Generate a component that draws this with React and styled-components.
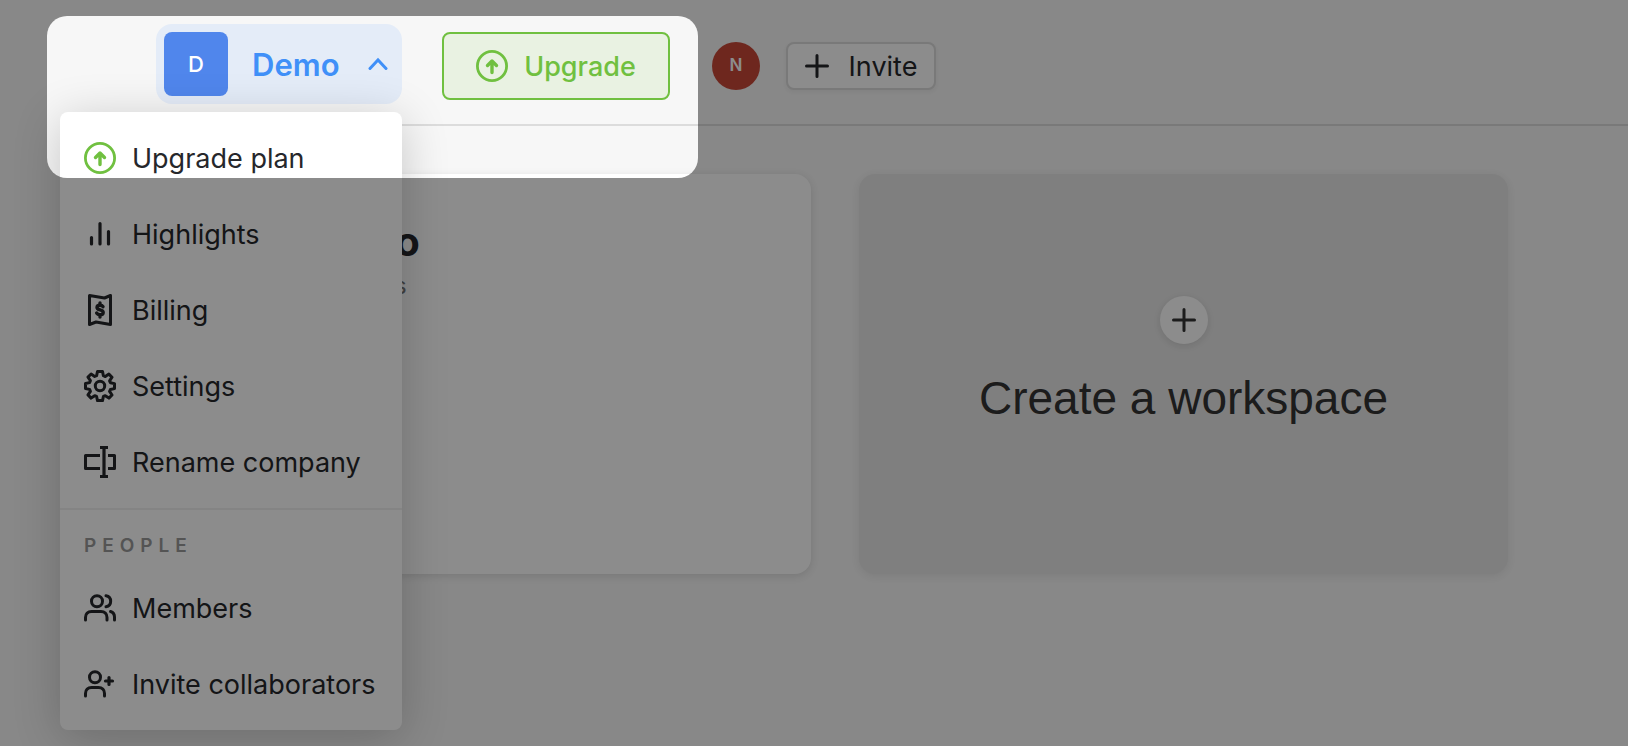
import React from "react";
import styled, { createGlobalStyle } from "styled-components";

const colors = {
  page: "#f7f7f7",
  text: "#26272b",
  blue: "#4090f8",
  green: "#70c040",
  border: "#dcdcdc",
};

const GlobalStyle = createGlobalStyle`
  * {
    box-sizing: border-box;
  }
  html,
  body,
  #root {
    height: 100%;
  }
  body {
    margin: 0;
    overflow: hidden;
    background: ${colors.page};
    color: ${colors.text};
    font-family: Inter, "Liberation Sans", sans-serif;
  }
  button {
    font: inherit;
    color: inherit;
    cursor: pointer;
  }
`;

const Page = styled.div`
  position: relative;
  min-height: 100%;
  overflow: hidden;
`;

const Header = styled.header`
  display: flex;
  align-items: flex-start;
  height: 126px;
  margin-left: 64px;
  padding: 24px 24px 0 92px;
  border-bottom: 2px solid ${colors.border};
`;

const CompanyButton = styled.button`
  display: flex;
  align-items: center;
  width: 246px;
  height: 80px;
  padding: 8px 14px 8px 8px;
  border: 0;
  border-radius: 16px;
  background: #e4ecf8;
  color: ${colors.blue};
  font-size: 31px;
  font-weight: 600;
`;

const CompanyLogo = styled.span`
  display: flex;
  align-items: center;
  justify-content: center;
  width: 64px;
  height: 64px;
  margin-right: 24px;
  border-radius: 8px;
  background: #5086ec;
  color: #fff;
  font-size: 22px;
  font-weight: 500;
`;

const Chevron = styled.svg`
  margin-left: auto;
`;

const Actions = styled.div`
  display: flex;
  align-items: center;
  margin: 8px 0 0 40px;
`;

const UpgradeButton = styled.button`
  display: flex;
  align-items: center;
  justify-content: center;
  gap: 16px;
  width: 228px;
  height: 68px;
  padding: 0;
  border: 2px solid ${colors.green};
  border-radius: 8px;
  background: #e9f2e2;
  color: ${colors.green};
  font-size: 27px;
  font-weight: 500;
`;

const Avatar = styled.span`
  display: flex;
  align-items: center;
  justify-content: center;
  width: 48px;
  height: 48px;
  margin: 0 26px 0 42px;
  padding-bottom: 3px;
  border-radius: 50%;
  background: #c84838;
  color: #fff;
  font-size: 17px;
  font-weight: 600;
`;

const InviteButton = styled.button`
  display: flex;
  align-items: center;
  justify-content: center;
  gap: 20px;
  width: 150px;
  height: 48px;
  padding: 0;
  border: 2px solid ${colors.border};
  border-radius: 8px;
  background: #fff;
  box-shadow: 0 2px 4px rgba(0, 0, 0, 0.05);
  font-size: 27px;
`;

const Workspaces = styled.main`
  display: grid;
  grid-template-columns: 1fr 1fr;
  gap: 48px;
  padding: 48px 120px 48px 162px;
`;

const WorkspaceCard = styled.section`
  display: flex;
  gap: 24px;
  height: 400px;
  padding: 40px 24px;
  border-radius: 16px;
  background: #fff;
  box-shadow: 0 2px 8px rgba(0, 0, 0, 0.12);
`;

const Thumbnail = styled.div`
  width: 96px;
  height: 96px;
  border-radius: 12px;
  background: #5086ec;
`;

const WorkspaceName = styled.h2`
  margin: 4px 0;
  font-size: 40px;
  font-weight: 700;
  line-height: 48px;
`;

const WorkspaceMeta = styled.p`
  margin: 0;
  color: #777;
  font-size: 24px;
  line-height: 32px;
`;

const CreateCard = styled.button`
  display: flex;
  flex-direction: column;
  align-items: center;
  height: 400px;
  padding: 122px 0 0;
  border: 0;
  border-radius: 16px;
  background: #e8e8e8;
  box-shadow: 0 2px 8px rgba(0, 0, 0, 0.08);
  color: #333;
  font-family: "Liberation Sans", Arial, sans-serif;
  font-size: 46px;
  line-height: 64px;
`;

const PlusCircle = styled.span`
  display: flex;
  align-items: center;
  justify-content: center;
  width: 48px;
  height: 48px;
  margin-bottom: 22px;
  border-radius: 50%;
  background: #fff;
  box-shadow: 0 2px 8px rgba(0, 0, 0, 0.12);
`;

const Menu = styled.nav`
  position: absolute;
  top: 112px;
  left: 60px;
  width: 342px;
  border-radius: 8px;
  background: #fff;
  box-shadow: 0 8px 48px rgba(0, 0, 0, 0.2);
`;

const MenuGroup = styled.div`
  padding: ${(props) => (props.$titled ? "0 0 8px" : "8px 0")};
  & + & {
    border-top: 2px solid #f0f0f0;
  }
`;

const MenuTitle = styled.h3`
  margin: 0;
  padding: 22px 24px 10px;
  color: #9a9a9a;
  font-size: 19px;
  font-weight: 600;
  line-height: 28px;
  letter-spacing: 6px;
`;

const MenuItem = styled.button`
  display: flex;
  align-items: center;
  gap: 16px;
  width: 100%;
  height: 76px;
  padding: 0 24px;
  border: 0;
  background: none;
  font-size: 27px;
  white-space: nowrap;
  svg {
    flex: none;
  }
`;

// everything around the highlighted area is dimmed by the shadow
const Spotlight = styled.div`
  position: absolute;
  top: 16px;
  left: 47px;
  width: 651px;
  height: 162px;
  border-radius: 20px;
  box-shadow: 0 0 0 9999px rgba(0, 0, 0, 0.45);
  pointer-events: none;
`;

function Icon({ size = 32, color = "currentColor", children }) {
  return (
    <svg
      width={size}
      height={size}
      viewBox="0 0 32 32"
      fill="none"
      stroke={color}
      strokeWidth="3"
      strokeLinecap="round"
      strokeLinejoin="round"
      aria-hidden="true"
    >
      {children}
    </svg>
  );
}

const UpgradeIcon = () => (
  <Icon color={colors.green}>
    <circle cx="16" cy="16" r="14.6" strokeWidth="2.8" />
    <path d="M16 22.5V11.5M11.5 15.5L16 11l4.5 4.5" strokeWidth="3.4" />
  </Icon>
);

const HighlightsIcon = () => (
  <Icon>
    <path d="M7.5 19.5v6.5M16 5.500v20.500M24.500 13.500v12.500" strokeWidth="3.2" />
  </Icon>
);

const BillingIcon = () => (
  <Icon>
    <path d="M5.500 1.500L20.500 4L26.500 1.500V30.500L12 28L5.500 30.500Z" />
    <path
      d="M19 12.700c-.6-1-1.700-1.400-3-1.400-1.800 0-3 .8-3 2.200 0 3.200 6.200 1.700 6.200 4.900 0 1.500-1.300 2.300-3.200 2.300-1.500 0-2.700-.5-3.300-1.600M16 9v2M16 21v2"
      strokeWidth="3.4"
    />
  </Icon>
);

// eight teeth, one every 45 degrees
const SettingsIcon = () => (
  <Icon>
    <path d="M13.500 1.500h5l.9 4.200 1.900.8 3.600-2.400 3.100 3.100-2.400 3.600.8 1.900 4.100.9v5l-4.100.9-.8 1.900 2.400 3.600-3.100 3.100-3.600-2.400-1.900.8-.9 4.100h-5l-.9-4.100-1.900-.8-3.600 2.400L4 24.900l2.400-3.600-.8-1.900-4.100-.9v-5l4.100-.9.8-1.900L4 7.100 7.100 4l3.600 2.400 1.900-.8z" />
    <circle cx="16" cy="16" r="4.700" />
  </Icon>
);

const RenameIcon = () => (
  <Icon>
    <path
      d="M16 9.500H1.500V22.500H16M24 9.500H30.500V22.500H24"
      strokeLinecap="butt"
    />
    <path
      d="M16 1.500H24M16 30.500H24M20 1.500V30.500"
      strokeWidth="3.2"
      strokeLinecap="butt"
    />
  </Icon>
);

const MembersIcon = () => (
  <Icon>
    <circle cx="13" cy="9.200" r="5.500" />
    <path d="M1.500 28v-2.500c0-3.600 2.400-6 6-6h9.500c3.600 0 6 2.400 6 6V28M22 3.700c6.200 1 6.200 10 0 11M26.500 19.500c2.500.8 4 2.800 4 5.500v3" />
  </Icon>
);

const CollaboratorIcon = () => (
  <Icon>
    <circle cx="11" cy="9.200" r="5.500" />
    <path d="M1.500 28v-2.500c0-3.600 2.400-6 6-6h7c3.600 0 6 2.400 6 6V28" />
    <path d="M25 9.500v7M21.500 13h7" strokeWidth="3.2" />
  </Icon>
);

const PlusIcon = () => (
  <Icon size={24}>
    <path d="M16 2v28M2 16h28" strokeWidth="4" />
  </Icon>
);

const companyItems = [
  { label: "Upgrade plan", icon: UpgradeIcon },
  { label: "Highlights", icon: HighlightsIcon },
  { label: "Billing", icon: BillingIcon },
  { label: "Settings", icon: SettingsIcon },
  { label: "Rename company", icon: RenameIcon },
];

const peopleItems = [
  { label: "Members", icon: MembersIcon },
  { label: "Invite collaborators", icon: CollaboratorIcon },
];

function MenuItems({ items }) {
  return items.map(({ label, icon: ItemIcon }) => (
    <MenuItem key={label} type="button">
      <ItemIcon />
      {label}
    </MenuItem>
  ));
}

function App() {
  return (
    <Page>
      <GlobalStyle />
      <Header>
        <CompanyButton type="button" aria-expanded="true">
          <CompanyLogo>D</CompanyLogo>
          Demo
          <Chevron width="20" height="14" viewBox="0 0 20 14" fill="none">
            <path
              d="M2 11.500L10 3l8 8.500"
              stroke="currentColor"
              strokeWidth="3"
              strokeLinecap="round"
            />
          </Chevron>
        </CompanyButton>
        <Actions>
          <UpgradeButton type="button">
            <UpgradeIcon />
            Upgrade
          </UpgradeButton>
          <Avatar>N</Avatar>
          <InviteButton type="button">
            <PlusIcon />
            Invite
          </InviteButton>
        </Actions>
      </Header>
      <Workspaces>
        <WorkspaceCard>
          <Thumbnail />
          <div>
            <WorkspaceName>Demo</WorkspaceName>
            <WorkspaceMeta>0 boards</WorkspaceMeta>
          </div>
        </WorkspaceCard>
        <CreateCard type="button">
          <PlusCircle>
            <PlusIcon />
          </PlusCircle>
          Create a workspace
        </CreateCard>
      </Workspaces>
      <Menu aria-label="Company">
        <MenuGroup>
          <MenuItems items={companyItems} />
        </MenuGroup>
        <MenuGroup $titled>
          <MenuTitle>PEOPLE</MenuTitle>
          <MenuItems items={peopleItems} />
        </MenuGroup>
      </Menu>
      <Spotlight />
    </Page>
  );
}

export default App;
